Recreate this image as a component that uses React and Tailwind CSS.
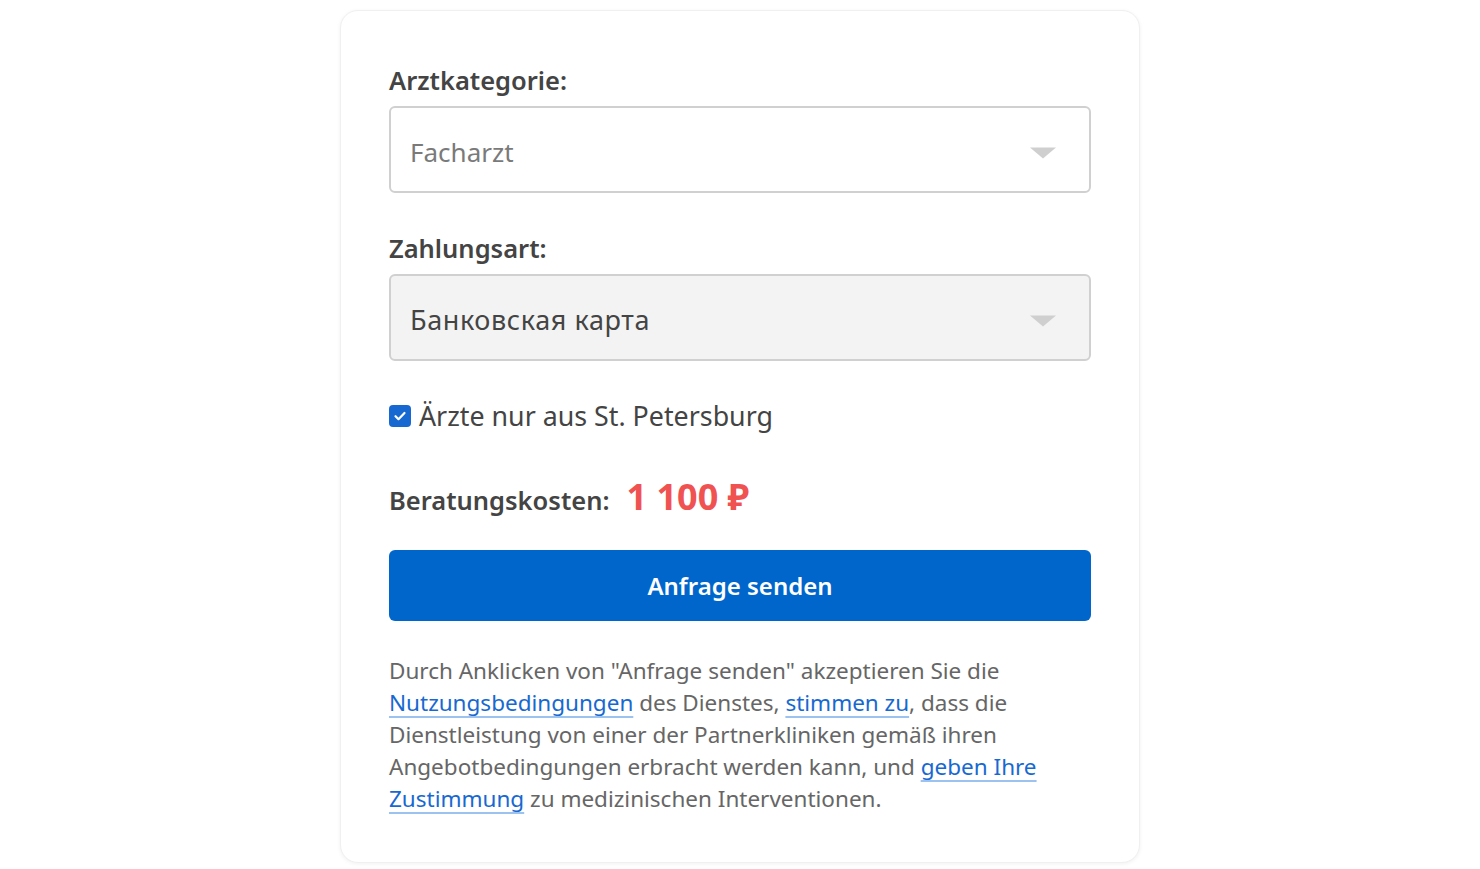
import React, { useState } from 'react';

const Caret = () => (
  <span className="absolute right-[33px] top-[calc(50%+3px)] -translate-y-1/2 w-0 h-0 border-l-[13px] border-r-[13px] border-t-[11px] border-l-transparent border-r-transparent border-t-[#cfcfcf]" />
);

const Select = ({ value, muted, filled }) => (
  <div
    className={`relative h-[87px] w-full border-2 border-[#d0d0d0] rounded-[6px] flex items-center px-[19px] pt-[6px] ${
      filled ? 'bg-[#f3f3f3]' : 'bg-white'
    }`}
  >
    <span
      className={
        muted
          ? 'text-[26px] text-[#7a7a7a]'
          : 'text-[27px] tracking-[0.6px] text-[#444]'
      }
    >
      {value}
    </span>
    <Caret />
  </div>
);

const A = ({ children }) => (
  <a
    href="#"
    className="text-[#1769d1] underline decoration-[#9cc3f0] decoration-2 underline-offset-[5px]"
  >
    {children}
  </a>
);

const App = () => {
  const [onlySpb, setOnlySpb] = useState(true);

  return (
    <div className="min-h-screen bg-white pt-[10px] font-['Noto_Sans','Open_Sans',sans-serif]">
      <div className="w-[800px] mx-auto bg-white rounded-[18px] border border-[#f0f0f0] shadow-[0_1px_4px_rgba(0,0,0,0.06)] px-[48px] pt-[52px] pb-[47px]">
        <div className="text-[25.5px] font-semibold text-[#444] leading-[34px] mb-[9px]">Arztkategorie:</div>
        <Select value="Facharzt" muted />

        <div className="text-[25.5px] font-semibold text-[#444] leading-[34px] mt-[38px] mb-[9px]">Zahlungsart:</div>
        <Select value="Банковская карта" filled />

        <label className="flex items-center gap-[8px] mt-[38px] cursor-pointer">
          <span
            onClick={() => setOnlySpb(!onlySpb)}
            className={`w-[22px] h-[22px] rounded-[4px] flex items-center justify-center ${
              onlySpb ? 'bg-[#1769d1]' : 'border-2 border-[#aaa] bg-white'
            }`}
          >
            {onlySpb && (
              <svg width="14" height="14" viewBox="0 0 14 14" fill="none">
                <path d="M2.5 7.2l3 3L11.5 4" stroke="white" strokeWidth="2.2" strokeLinecap="round" strokeLinejoin="round" />
              </svg>
            )}
          </span>
          <span className="text-[26.8px] text-[#444] leading-[34px]">Ärzte nur aus St. Petersburg</span>
        </label>

        <div className="flex items-baseline gap-[17px] mt-[42px] leading-[44px]">
          <span className="text-[25.5px] font-semibold text-[#444]">Beratungskosten:</span>
          <span className="text-[36px] font-bold text-[#f05252]">1 100 ₽</span>
        </div>

        <button className="mt-[28px] w-full h-[71px] rounded-[6px] bg-[#0066cc] text-white text-[24px] font-semibold">
          Anfrage senden
        </button>

        <p className="mt-[34px] text-[22.5px] leading-[32px] text-[#666]">
          Durch Anklicken von "Anfrage senden" akzeptieren Sie die <A>Nutzungsbedingungen</A> des Dienstes,{' '}
          <A>stimmen zu</A>, dass die Dienstleistung von einer der Partnerkliniken gemäß ihren Angebotbedingungen
          erbracht werden kann, und <A>geben Ihre Zustimmung</A> zu medizinischen Interventionen.
        </p>
      </div>
    </div>
  );
};

export default App;
